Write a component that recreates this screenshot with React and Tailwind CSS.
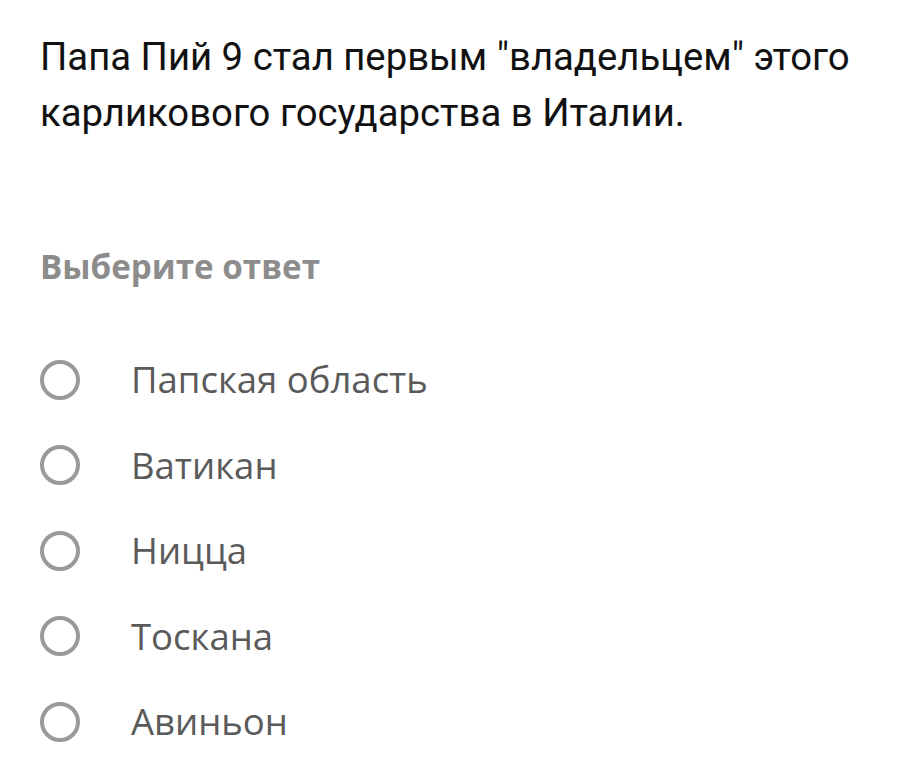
import React from 'react';

const options = ['Папская область', 'Ватикан', 'Ницца', 'Тоскана', 'Авиньон'];

const App = () => {
  return (
    <div className="w-[916px] h-[763px] bg-white overflow-hidden px-10 pt-[29px]">
      <p className="font-['Roboto',sans-serif] text-[38.3px] leading-[56px] text-[#111]">
        Папа Пий 9 стал первым "владельцем" этого карликового государства в Италии.
      </p>
      <h2 className="mt-[106px] font-['Open_Sans',sans-serif] font-bold text-[33.2px] leading-[40px] text-[#8c8c8c]">
        Выберите ответ
      </h2>
      <div className="mt-[50px] flex flex-col">
        {options.map((option, index) => (
          <label key={index} className="flex items-center h-[85.5px] cursor-pointer">
            <span className="w-10 h-10 rounded-full border-[4px] border-[#9a9a9a] shrink-0" />
            <span className="ml-[51px] font-['Open_Sans',sans-serif] text-[36.5px] text-[#5a5a5a]">
              {option}
            </span>
          </label>
        ))}
      </div>
    </div>
  );
};

export default App;
